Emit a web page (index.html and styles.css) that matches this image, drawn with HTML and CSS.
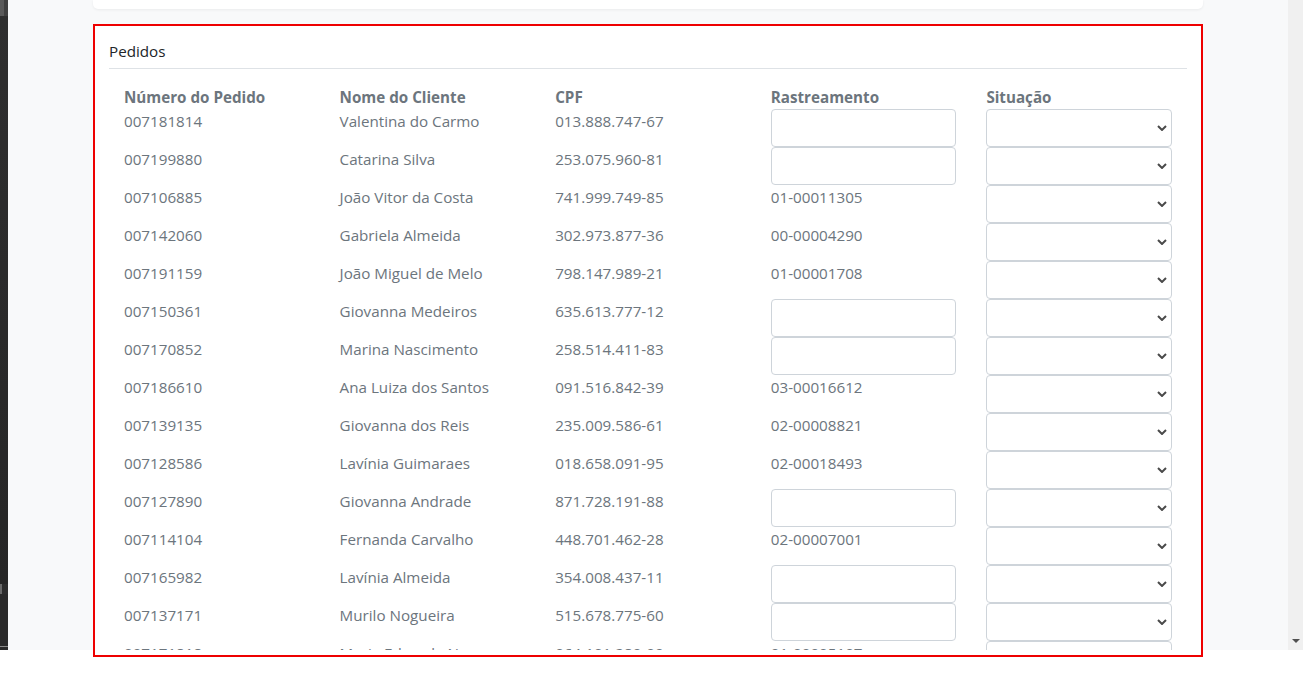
FILE: index.html
```html
<!DOCTYPE html>
<html lang="pt-BR">
<head>
<meta charset="utf-8">
<title>Pedidos</title>
<link rel="stylesheet" href="styles.css">
</head>
<body>
<div class="screen">
  <div class="window">
    <div class="left-strip">
      <div class="strip-thumb"><span class="thumb-a"></span><span class="thumb-b"></span></div>
      <div class="strip-fill"></div>
      <div class="strip-mark"></div>
      <div class="strip-gap"></div>
      <div class="strip-line"></div>
      <div class="strip-end"></div>
    </div>
    <div class="page">
      <div class="container">
        <div class="top-card"></div>
        <div class="card">
          <h5 class="card-title">Pedidos</h5>
          <hr class="divider">
          <table class="orders">
            <thead>
              <tr><th>Número do Pedido</th><th>Nome do Cliente</th><th>CPF</th><th>Rastreamento</th><th>Situação</th></tr>
            </thead>
            <tbody>
              <tr><td>007181814</td><td>Valentina do Carmo</td><td>013.888.747-67</td><td><input class="field" type="text"></td><td><span class="sel"><select class="field"><option></option></select><svg class="chev" width="10" height="6" viewBox="0 0 10 6"><polyline points="1,1 5,5 9,1" fill="none" stroke="#4a4a4a" stroke-width="2"/></svg></span></td></tr>
              <tr><td>007199880</td><td>Catarina Silva</td><td>253.075.960-81</td><td><input class="field" type="text"></td><td><span class="sel"><select class="field"><option></option></select><svg class="chev" width="10" height="6" viewBox="0 0 10 6"><polyline points="1,1 5,5 9,1" fill="none" stroke="#4a4a4a" stroke-width="2"/></svg></span></td></tr>
              <tr><td>007106885</td><td>João Vitor da Costa</td><td>741.999.749-85</td><td>01-00011305</td><td><span class="sel"><select class="field"><option></option></select><svg class="chev" width="10" height="6" viewBox="0 0 10 6"><polyline points="1,1 5,5 9,1" fill="none" stroke="#4a4a4a" stroke-width="2"/></svg></span></td></tr>
              <tr><td>007142060</td><td>Gabriela Almeida</td><td>302.973.877-36</td><td>00-00004290</td><td><span class="sel"><select class="field"><option></option></select><svg class="chev" width="10" height="6" viewBox="0 0 10 6"><polyline points="1,1 5,5 9,1" fill="none" stroke="#4a4a4a" stroke-width="2"/></svg></span></td></tr>
              <tr><td>007191159</td><td>João Miguel de Melo</td><td>798.147.989-21</td><td>01-00001708</td><td><span class="sel"><select class="field"><option></option></select><svg class="chev" width="10" height="6" viewBox="0 0 10 6"><polyline points="1,1 5,5 9,1" fill="none" stroke="#4a4a4a" stroke-width="2"/></svg></span></td></tr>
              <tr><td>007150361</td><td>Giovanna Medeiros</td><td>635.613.777-12</td><td><input class="field" type="text"></td><td><span class="sel"><select class="field"><option></option></select><svg class="chev" width="10" height="6" viewBox="0 0 10 6"><polyline points="1,1 5,5 9,1" fill="none" stroke="#4a4a4a" stroke-width="2"/></svg></span></td></tr>
              <tr><td>007170852</td><td>Marina Nascimento</td><td>258.514.411-83</td><td><input class="field" type="text"></td><td><span class="sel"><select class="field"><option></option></select><svg class="chev" width="10" height="6" viewBox="0 0 10 6"><polyline points="1,1 5,5 9,1" fill="none" stroke="#4a4a4a" stroke-width="2"/></svg></span></td></tr>
              <tr><td>007186610</td><td>Ana Luiza dos Santos</td><td>091.516.842-39</td><td>03-00016612</td><td><span class="sel"><select class="field"><option></option></select><svg class="chev" width="10" height="6" viewBox="0 0 10 6"><polyline points="1,1 5,5 9,1" fill="none" stroke="#4a4a4a" stroke-width="2"/></svg></span></td></tr>
              <tr><td>007139135</td><td>Giovanna dos Reis</td><td>235.009.586-61</td><td>02-00008821</td><td><span class="sel"><select class="field"><option></option></select><svg class="chev" width="10" height="6" viewBox="0 0 10 6"><polyline points="1,1 5,5 9,1" fill="none" stroke="#4a4a4a" stroke-width="2"/></svg></span></td></tr>
              <tr><td>007128586</td><td>Lavínia Guimaraes</td><td>018.658.091-95</td><td>02-00018493</td><td><span class="sel"><select class="field"><option></option></select><svg class="chev" width="10" height="6" viewBox="0 0 10 6"><polyline points="1,1 5,5 9,1" fill="none" stroke="#4a4a4a" stroke-width="2"/></svg></span></td></tr>
              <tr><td>007127890</td><td>Giovanna Andrade</td><td>871.728.191-88</td><td><input class="field" type="text"></td><td><span class="sel"><select class="field"><option></option></select><svg class="chev" width="10" height="6" viewBox="0 0 10 6"><polyline points="1,1 5,5 9,1" fill="none" stroke="#4a4a4a" stroke-width="2"/></svg></span></td></tr>
              <tr><td>007114104</td><td>Fernanda Carvalho</td><td>448.701.462-28</td><td>02-00007001</td><td><span class="sel"><select class="field"><option></option></select><svg class="chev" width="10" height="6" viewBox="0 0 10 6"><polyline points="1,1 5,5 9,1" fill="none" stroke="#4a4a4a" stroke-width="2"/></svg></span></td></tr>
              <tr><td>007165982</td><td>Lavínia Almeida</td><td>354.008.437-11</td><td><input class="field" type="text"></td><td><span class="sel"><select class="field"><option></option></select><svg class="chev" width="10" height="6" viewBox="0 0 10 6"><polyline points="1,1 5,5 9,1" fill="none" stroke="#4a4a4a" stroke-width="2"/></svg></span></td></tr>
              <tr><td>007137171</td><td>Murilo Nogueira</td><td>515.678.775-60</td><td><input class="field" type="text"></td><td><span class="sel"><select class="field"><option></option></select><svg class="chev" width="10" height="6" viewBox="0 0 10 6"><polyline points="1,1 5,5 9,1" fill="none" stroke="#4a4a4a" stroke-width="2"/></svg></span></td></tr>
              <tr><td>007171818</td><td>Maria Eduarda Nunes</td><td>064.101.280-09</td><td>01-00005107</td><td><span class="sel"><select class="field"><option></option></select><svg class="chev" width="10" height="6" viewBox="0 0 10 6"><polyline points="1,1 5,5 9,1" fill="none" stroke="#4a4a4a" stroke-width="2"/></svg></span></td></tr>
            </tbody>
          </table>
        </div>
      </div>
    </div>
    <div class="scrollbar">
      <svg class="scroll-arrow" width="8" height="4" viewBox="0 0 8 4"><polygon points="0,0 8,0 4,4" fill="#505050"/></svg>
    </div>
  </div>
  <div class="highlight"></div>
</div>
</body>
</html>
```

FILE: styles.css
```css
* { box-sizing: border-box; }

html, body {
  margin: 0;
  padding: 0;
  background: #ffffff;
}

body {
  font-family: "Open Sans", "Noto Sans", "Liberation Sans", sans-serif;
}

.screen {
  position: relative;
  width: 1303px;
  height: 683px;
  overflow: hidden;
  background: #ffffff;
}

.window {
  display: flex;
  height: 650px;
}

.left-strip {
  width: 8px;
  flex: none;
  display: flex;
  flex-direction: column;
  background: #2d2d2d;
}

.strip-thumb {
  display: flex;
  height: 16px;
}
.thumb-a { width: 4px; background: #5a5a5a; }
.thumb-b { width: 4px; background: #404040; }

.strip-fill { flex: 1; background: linear-gradient(#2f2f2f, #262626); }
.strip-mark { height: 10px; width: 2px; background: #6a6a6a; }
.strip-gap { height: 52px; background: #2a2a2a; }
.strip-line { height: 1px; background: #8a8a8a; }
.strip-end { height: 3px; background: #2a2a2a; }

.page {
  flex: 1;
  background: #f8f9fa;
  overflow: hidden;
}

.container {
  width: 1110px;
  margin: 0 auto;
}

.top-card {
  height: 9px;
  background: #ffffff;
  border-radius: 0 0 5px 5px;
  box-shadow: 0 1px 3px rgba(0, 0, 0, 0.06);
}

.card {
  margin-top: 15px;
  background: #ffffff;
  padding: 16px 16px 0;
}

.card-title {
  margin: 0;
  font-size: 15.2px;
  line-height: 22px;
  font-weight: 500;
  color: #212529;
}

.divider {
  margin: 6px 0 16px;
  border: 0;
  border-top: 1px solid #dee2e6;
  height: 0;
}

.orders {
  width: 1078px;
  border-collapse: collapse;
  table-layout: fixed;
  font-size: 15.2px;
  color: #6c757d;
}

.orders th {
  text-align: left;
  font-weight: 700;
  padding: 0 15px;
  height: 24px;
  line-height: 24px;
  color: #6c757d;
  white-space: nowrap;
}

.orders td {
  padding: 0 15px;
  height: 38px;
  line-height: 24px;
  vertical-align: top;
  white-space: nowrap;
}

.field {
  display: block;
  width: 100%;
  height: 38px;
  margin: 0;
  border: 1px solid #ced4da;
  border-radius: 4px;
  background: #ffffff;
  font: inherit;
  padding: 0 12px;
}

select.field {
  appearance: none;
  -webkit-appearance: none;
}

.sel {
  position: relative;
  display: block;
}

.chev {
  position: absolute;
  right: 5px;
  top: 16px;
}

.scrollbar {
  width: 15px;
  flex: none;
  background: #f0f0f0;
  display: flex;
  flex-direction: column;
  justify-content: flex-end;
  align-items: center;
  padding-bottom: 7px;
}

.highlight {
  position: absolute;
  left: 93px;
  top: 24px;
  width: 1110px;
  height: 633px;
  border: 2px solid #ee0000;
  pointer-events: none;
}
```
